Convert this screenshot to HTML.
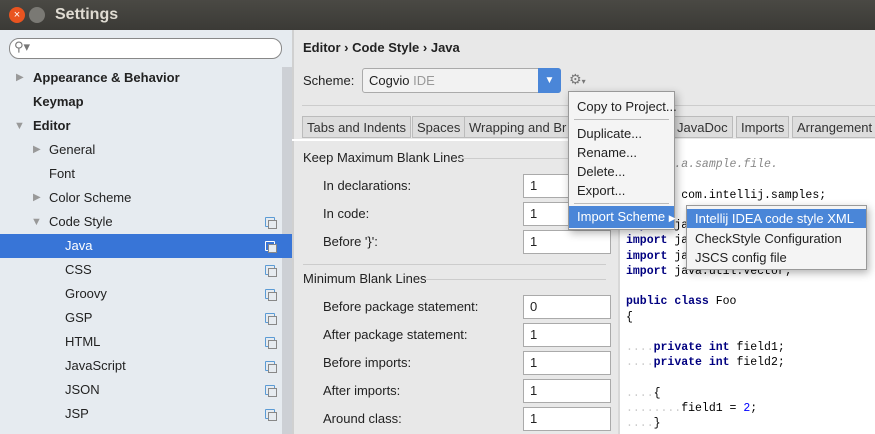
<!DOCTYPE html><html><head><style>
*{margin:0;padding:0;box-sizing:border-box}
body{width:875px;height:434px;overflow:hidden;font-family:"Liberation Sans","DejaVu Sans",sans-serif;font-size:13px;color:#222;background:#e8e8e8;position:relative}
.a{position:absolute;white-space:nowrap}
.row{position:absolute;left:0;width:282px;height:24px;line-height:24px}
.ic{position:absolute;left:265px;top:7px;width:10px;height:10px;border:1px solid #5b9bd5;border-radius:1px}
.ic:after{content:"";position:absolute;left:2px;top:2px;width:7px;height:7px;border:1px solid #888;background:#e6ebf0}
.inp{position:absolute;left:523px;width:88px;height:24px;background:#fff;border:1px solid #aaa;line-height:22px;padding-left:6px}
.lbl{position:absolute;left:323px;line-height:24px}
.tab{position:absolute;top:116px;height:22px;line-height:22px;border:1px solid #bbb;background:#ddd;padding:0 4px;color:#333}
.menu{position:absolute;background:#f4f4f4;border:1px solid #999;box-shadow:2px 3px 8px rgba(0,0,0,.3)}
.mi{height:19px;line-height:19px;padding-left:8px;white-space:nowrap}
.code{position:absolute;left:620px;top:140px;width:255px;height:294px;background:#fff;font-family:"Liberation Mono",monospace;font-size:11.5px;line-height:15.25px;padding:17px 0 0 6px;white-space:pre;color:#000}
.k{color:#000080;font-weight:bold}.d{color:#ccc}
</style></head><body>
<div class="a" style="left:0;top:0;width:875px;height:30px;background:linear-gradient(#4a4944,#3b3a36)"></div>
<div class="a" style="left:9px;top:7px;width:16px;height:16px;border-radius:8px;background:#e95420;color:#fff;font-size:11px;line-height:16px;text-align:center">×</div>
<div class="a" style="left:29px;top:7px;width:16px;height:16px;border-radius:8px;background:#7a7974"></div>
<div class="a" style="left:55px;top:6px;color:#dfdbd2;font-size:16px;font-weight:bold">Settings</div>
<div class="a" style="left:0;top:30px;width:292px;height:404px;background:#e6ebf0"></div>
<div class="a" style="left:282px;top:67px;width:10px;height:367px;background:#cdd0d5"></div>
<div class="a" style="left:292px;top:30px;width:2px;height:404px;background:#d0d0d0"></div>
<div class="a" style="left:9px;top:38px;width:273px;height:21px;background:#fff;border:1px solid #888;border-radius:10px"></div>
<div class="a" style="left:14px;top:39px;color:#777;font-size:13px">⚲▾</div>
<div class="row" style="top:66px"><span class="a" style="left:16px;color:#999;font-size:10px">▶</span><b class="a" style="left:33px">Appearance &amp; Behavior</b></div>
<div class="row" style="top:90px"><b class="a" style="left:33px">Keymap</b></div>
<div class="row" style="top:114px"><span class="a" style="left:14px;color:#999;font-size:11px">▼</span><b class="a" style="left:33px">Editor</b></div>
<div class="row" style="top:138px"><span class="a" style="left:33px;color:#999;font-size:10px">▶</span><span class="a" style="left:49px">General</span></div>
<div class="row" style="top:162px"><span class="a" style="left:49px">Font</span></div>
<div class="row" style="top:186px"><span class="a" style="left:33px;color:#999;font-size:10px">▶</span><span class="a" style="left:49px">Color Scheme</span></div>
<div class="row" style="top:210px"><span class="a" style="left:31px;color:#999;font-size:11px">▼</span><span class="a" style="left:49px">Code Style</span><i class="ic"></i></div>
<div class="row" style="top:234px;width:292px;background:#3875d7;color:#fff"><span class="a" style="left:65px">Java</span><i class="ic" style="border-color:#fff"></i></div>
<div class="row" style="top:258px"><span class="a" style="left:65px">CSS</span><i class="ic"></i></div>
<div class="row" style="top:282px"><span class="a" style="left:65px">Groovy</span><i class="ic"></i></div>
<div class="row" style="top:306px"><span class="a" style="left:65px">GSP</span><i class="ic"></i></div>
<div class="row" style="top:330px"><span class="a" style="left:65px">HTML</span><i class="ic"></i></div>
<div class="row" style="top:354px"><span class="a" style="left:65px">JavaScript</span><i class="ic"></i></div>
<div class="row" style="top:378px"><span class="a" style="left:65px">JSON</span><i class="ic"></i></div>
<div class="row" style="top:402px"><span class="a" style="left:65px">JSP</span><i class="ic"></i></div>

<b class="a" style="left:303px;top:40px">Editor › Code Style › Java</b>
<span class="a" style="left:303px;top:73px">Scheme:</span>
<div class="a" style="left:362px;top:68px;width:199px;height:25px;background:#f2f2f2;border:1px solid #aaa;border-radius:3px;line-height:23px;padding-left:6px">Cogvio <span style="color:#999">IDE</span></div>
<div class="a" style="left:538px;top:68px;width:23px;height:25px;background:#4a86d8;border-radius:0 3px 3px 0;color:#fff;text-align:center;line-height:25px;font-size:10px">▼</div>
<span class="a" style="left:569px;top:71px;color:#777;font-size:14px">⚙<span style="font-size:8px">▾</span></span>
<div class="a" style="left:302px;top:105px;width:573px;height:1px;background:#ccc"></div>
<div class="tab" style="left:302px">Tabs and Indents</div>
<div class="tab" style="left:412px">Spaces</div>
<div class="tab" style="left:464px;width:110px">Wrapping and Br</div>
<div class="tab" style="left:672px">JavaDoc</div>
<div class="tab" style="left:736px">Imports</div>
<div class="tab" style="left:792px;width:90px">Arrangement</div>
<div class="a" style="left:292px;top:139px;width:583px;height:2px;background:#fff"></div>
<span class="a" style="left:303px;top:150px">Keep Maximum Blank Lines</span>
<div class="a" style="left:458px;top:158px;width:148px;height:1px;background:#ccc"></div>
<span class="lbl" style="top:174px">In declarations:</span><div class="inp" style="top:174px">1</div>
<span class="lbl" style="top:202px">In code:</span><div class="inp" style="top:202px">1</div>
<span class="lbl" style="top:230px">Before '}':</span><div class="inp" style="top:230px">1</div>
<div class="a" style="left:303px;top:264px;width:303px;height:1px;background:#ccc"></div>
<span class="a" style="left:303px;top:271px;background:#e8e8e8;padding-right:6px">Minimum Blank Lines</span>
<div class="a" style="left:425px;top:279px;width:181px;height:1px;background:#ccc"></div>
<span class="lbl" style="top:295px">Before package statement:</span><div class="inp" style="top:295px">0</div>
<span class="lbl" style="top:323px">After package statement:</span><div class="inp" style="top:323px">1</div>
<span class="lbl" style="top:351px">Before imports:</span><div class="inp" style="top:351px">1</div>
<span class="lbl" style="top:379px">After imports:</span><div class="inp" style="top:379px">1</div>
<span class="lbl" style="top:407px">Around class:</span><div class="inp" style="top:407px">1</div>
<div class="a" style="left:618px;top:140px;width:2px;height:294px;background:#d8d8d8"></div>
<div class="code"><i style="color:#888">This.is.a.sample.file.</i>

<span class="k">package</span> com.intellij.samples;

<span class="k">import</span> java.util.List;
<span class="k">import</span> java.util.Map;
<span class="k">import</span> java.util.Set;
<span class="k">import</span> java.util.Vector;

<span class="k">public</span> <span class="k">class</span> Foo
{

<span class="d">....</span><span class="k">private</span> <span class="k">int</span> field1;
<span class="d">....</span><span class="k">private</span> <span class="k">int</span> field2;

<span class="d">....</span>{
<span class="d">........</span>field1 = <span style="color:#00f">2</span>;
<span class="d">....</span>}</div>

<div class="menu" style="left:568px;top:91px;width:107px;height:139px;padding-top:5px">
<div class="mi">Copy to Project...</div>
<div style="height:1px;background:#bbb;margin:3px 5px 4px"></div>
<div class="mi">Duplicate...</div><div class="mi">Rename...</div><div class="mi">Delete...</div><div class="mi">Export...</div>
<div style="height:1px;background:#bbb;margin:3px 5px 2px"></div>
<div class="mi" style="background:#4a86d8;color:#fff;height:22px;line-height:22px">Import Scheme <span style="font-size:9px">▶</span></div>
</div>
<div class="menu" style="left:686px;top:205px;width:181px;height:65px;padding-top:3px">
<div class="mi" style="background:#4a86d8;color:#fff;margin-bottom:1px">Intellij IDEA code style XML</div>
<div class="mi">CheckStyle Configuration</div>
<div class="mi">JSCS config file</div>
</div>
</body></html>
